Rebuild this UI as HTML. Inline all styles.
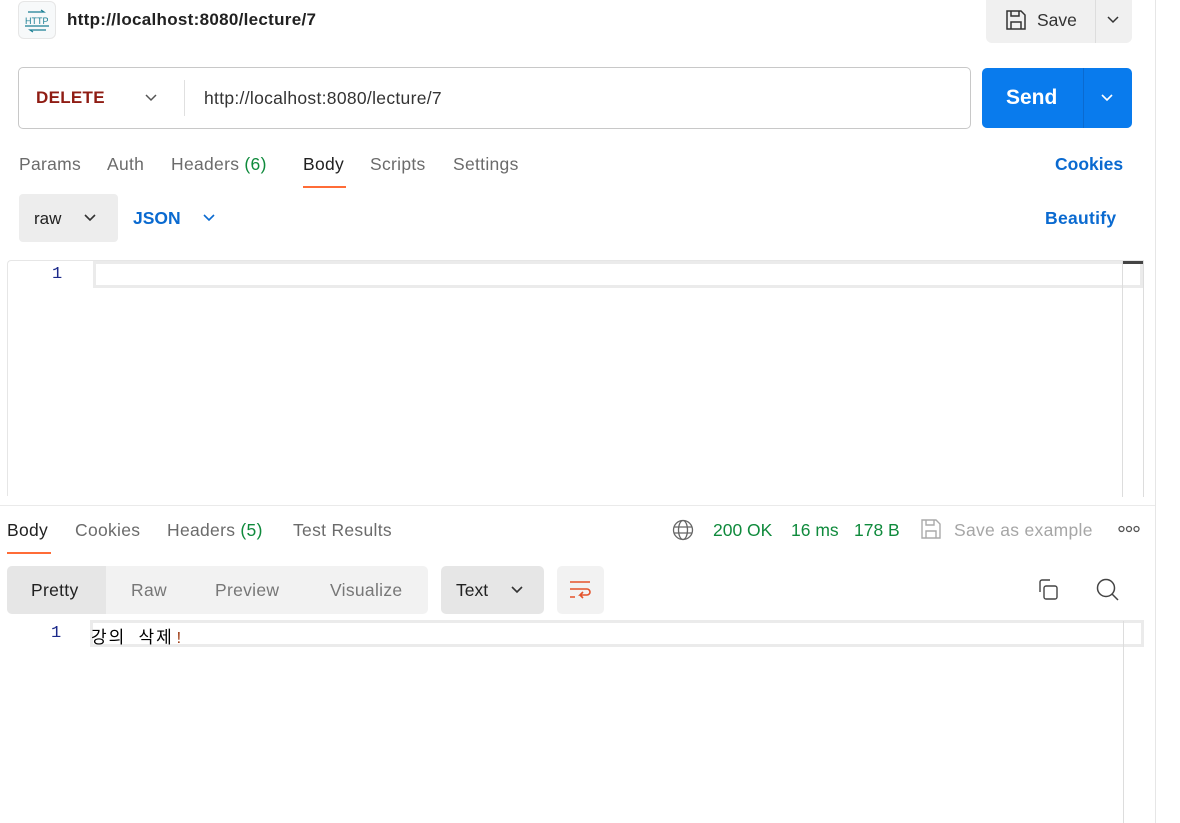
<!DOCTYPE html>
<html><head><meta charset="utf-8"><style>
*{box-sizing:border-box;margin:0;padding:0}
body{width:1180px;height:823px;background:#fff;font-family:"Liberation Sans","Noto Sans CJK KR",sans-serif;position:relative;overflow:hidden;color:#212121}
.a{position:absolute}
.t{font-size:17.5px;color:#6b6b6b;letter-spacing:0.3px}
</style></head><body>
<div class="a" style="left:1155px;top:0;width:1px;height:823px;background:#e6e6e6"></div>
<div class="a" style="left:18px;top:1px;width:38px;height:38px;border:1px solid #e6e6e6;border-radius:6px;background:#f7f9fa"></div>
<svg class="a" style="left:22px;top:6px" width="30" height="30" viewBox="0 0 30 30" fill="none" stroke="#1a7f94" stroke-width="1.2"><path d="M6 6h16l-3-2M24 24H8l3 2"/><text x="3" y="18" font-size="9" fill="#1a7f94" stroke="none" font-family="Liberation Sans">HTTP</text><path d="M3 20h24"/></svg>
<div class="a" style="left:67px;top:10px;font-size:17px;font-weight:bold;color:#212121;letter-spacing:0.3px">http://localhost:8080/lecture/7</div>
<div class="a" style="left:986px;top:0;width:146px;height:43px;background:#f0f0f0;border-radius:0 0 6px 6px"></div>
<div class="a" style="left:1095px;top:0;width:1px;height:43px;background:#ddd"></div>
<svg class="a" style="left:1005px;top:9px" width="22" height="22" viewBox="0 0 22 22" fill="none" stroke="#333" stroke-width="1.5"><path d="M2 2h14l4 4v14H2z M6 2v5h8V2 M6 20v-7h10v7"/></svg>
<div class="a" style="left:1037px;top:10px;font-size:17.5px;color:#333">Save</div>
<svg class="a" style="left:1106px;top:14px" width="14" height="12" viewBox="0 0 14 12" fill="none" stroke="#333" stroke-width="1.5"><path d="M2 3l5 5 5-5"/></svg>
<div class="a" style="left:18px;top:67px;width:953px;height:62px;border:1px solid #c8c8c8;border-radius:5px"></div>
<div class="a" style="left:184px;top:80px;width:1px;height:36px;background:#e0e0e0"></div>
<div class="a" style="left:36px;top:88px;font-size:17px;font-weight:bold;color:#8f1c13;letter-spacing:0.3px">DELETE</div>
<svg class="a" style="left:143px;top:92px" width="16" height="12" viewBox="0 0 16 12" fill="none" stroke="#555" stroke-width="1.5"><path d="M3 3l5 5 5-5"/></svg>
<div class="a" style="left:204px;top:88px;font-size:17.5px;color:#333;letter-spacing:0.3px">http://localhost:8080/lecture/7</div>
<div class="a" style="left:982px;top:68px;width:150px;height:60px;background:#097bed;border-radius:5px"></div>
<div class="a" style="left:1083px;top:68px;width:1px;height:60px;background:#0a6ad0"></div>
<div class="a" style="left:1006px;top:86px;font-size:21px;font-weight:bold;color:#fff">Send</div>
<svg class="a" style="left:1100px;top:92px" width="14" height="12" viewBox="0 0 14 12" fill="none" stroke="#fff" stroke-width="1.6"><path d="M2 3l5 5 5-5"/></svg>
<div class="a t" style="left:19px;top:154px">Params</div>
<div class="a t" style="left:107px;top:154px">Auth</div>
<div class="a t" style="left:171px;top:154px">Headers <span style="color:#0f8a3c">(6)</span></div>
<div class="a t" style="left:303px;top:154px;color:#212121">Body</div>
<div class="a" style="left:303px;top:186px;width:43px;height:2px;background:#ff6c37"></div>
<div class="a t" style="left:370px;top:154px">Scripts</div>
<div class="a t" style="left:453px;top:154px">Settings</div>
<div class="a" style="left:1055px;top:154px;font-size:17.5px;font-weight:bold;color:#0a6ad0">Cookies</div>
<div class="a" style="left:19px;top:194px;width:99px;height:48px;background:#ededed;border-radius:4px"></div>
<div class="a" style="left:34px;top:209px;font-size:17px;color:#212121">raw</div>
<svg class="a" style="left:83px;top:212px" width="14" height="12" viewBox="0 0 14 12" fill="none" stroke="#333" stroke-width="1.6"><path d="M2 3l5 5 5-5"/></svg>
<div class="a" style="left:133px;top:208px;font-size:17.5px;font-weight:bold;color:#0a6ad0">JSON</div>
<svg class="a" style="left:202px;top:212px" width="14" height="12" viewBox="0 0 14 12" fill="none" stroke="#0a6ad0" stroke-width="1.6"><path d="M2 3l5 5 5-5"/></svg>
<div class="a" style="left:1045px;top:208px;font-size:17.5px;font-weight:bold;color:#0a6ad0;letter-spacing:0.3px">Beautify</div>
<div class="a" style="left:7px;top:260px;width:1137px;height:236px;border-left:1px solid #e6e6e6;border-top:1px solid #e6e6e6;border-radius:4px 0 0 0"></div>
<div class="a" style="left:93px;top:261px;width:1050px;height:27px;border:3px solid #ebebeb"></div>
<div class="a" style="left:52px;top:265px;font-family:'Liberation Mono',monospace;font-size:17px;color:#1c2a8a">1</div>
<div class="a" style="left:1122px;top:261px;width:1px;height:236px;background:#ddd"></div>
<div class="a" style="left:1143px;top:261px;width:1px;height:236px;background:#ddd"></div>
<div class="a" style="left:1123px;top:261px;width:20px;height:3px;background:#444"></div>
<div class="a" style="left:0;top:505px;width:1155px;height:1px;background:#eaeaea"></div>
<div class="a t" style="left:7px;top:520px;color:#212121">Body</div>
<div class="a" style="left:7px;top:552px;width:44px;height:2px;background:#ff6c37"></div>
<div class="a t" style="left:75px;top:520px">Cookies</div>
<div class="a t" style="left:167px;top:520px">Headers <span style="color:#0f8a3c">(5)</span></div>
<div class="a t" style="left:293px;top:520px">Test Results</div>
<svg class="a" style="left:672px;top:519px" width="22" height="22" viewBox="0 0 22 22" fill="none" stroke="#666" stroke-width="1.3"><circle cx="11" cy="11" r="9.5"/><ellipse cx="11" cy="11" rx="4.5" ry="9.5"/><path d="M2 8h18M2 14h18"/></svg>
<div class="a" style="left:713px;top:520px;font-size:17.5px;color:#0f8a3c">200 OK</div>
<div class="a" style="left:791px;top:520px;font-size:17.5px;color:#0f8a3c">16 ms</div>
<div class="a" style="left:854px;top:520px;font-size:17.5px;color:#0f8a3c">178 B</div>
<svg class="a" style="left:920px;top:518px" width="22" height="22" viewBox="0 0 22 22" fill="none" stroke="#aaa" stroke-width="1.4"><path d="M2 2h14l4 4v14H2z M6 2v5h8V2 M6 20v-7h10v7"/></svg>
<div class="a" style="left:954px;top:520px;font-size:17.5px;color:#a6a6a6;letter-spacing:0.3px">Save as example</div>
<svg class="a" style="left:1118px;top:525px" width="22" height="8" viewBox="0 0 22 8" fill="none" stroke="#555" stroke-width="1.3"><circle cx="3.5" cy="4" r="2.5"/><circle cx="11" cy="4" r="2.5"/><circle cx="18.5" cy="4" r="2.5"/></svg>
<div class="a" style="left:7px;top:566px;width:421px;height:48px;background:#f2f2f2;border-radius:5px"></div>
<div class="a" style="left:7px;top:566px;width:99px;height:48px;background:#e6e6e6;border-radius:5px 0 0 5px"></div>
<div class="a" style="left:31px;top:580px;font-size:17.5px;color:#212121;letter-spacing:0.3px">Pretty</div>
<div class="a" style="left:131px;top:580px;font-size:17.5px;color:#777;letter-spacing:0.3px">Raw</div>
<div class="a" style="left:215px;top:580px;font-size:17.5px;color:#777;letter-spacing:0.3px">Preview</div>
<div class="a" style="left:330px;top:580px;font-size:17.5px;color:#777;letter-spacing:0.3px">Visualize</div>
<div class="a" style="left:441px;top:566px;width:103px;height:48px;background:#e6e6e6;border-radius:5px"></div>
<div class="a" style="left:456px;top:580px;font-size:17.5px;color:#212121">Text</div>
<svg class="a" style="left:510px;top:584px" width="14" height="12" viewBox="0 0 14 12" fill="none" stroke="#333" stroke-width="1.6"><path d="M2 3l5 5 5-5"/></svg>
<div class="a" style="left:557px;top:566px;width:47px;height:48px;background:#f2f2f2;border-radius:5px"></div>
<svg class="a" style="left:568px;top:579px" width="24" height="22" viewBox="0 0 24 22" fill="none" stroke="#e4532a" stroke-width="1.6"><path d="M2 3h20M2 10h17a3 3 0 0 1 0 6h-7l3-3M12 16l3 3M2 18h5"/></svg>
<svg class="a" style="left:1036px;top:578px" width="24" height="24" viewBox="0 0 24 24" fill="none" stroke="#444" stroke-width="1.4"><path d="M4 14V4a2 2 0 0 1 2-2h8"/><rect x="8" y="8" width="13" height="13" rx="2"/></svg>
<svg class="a" style="left:1095px;top:577px" width="26" height="26" viewBox="0 0 26 26" fill="none" stroke="#444" stroke-width="1.5"><circle cx="11" cy="11" r="8.5"/><path d="M17 17l6 6"/></svg>
<div class="a" style="left:90px;top:620px;width:1054px;height:27px;border:3px solid #ebebeb"></div>
<div class="a" style="left:51px;top:624px;font-family:'Liberation Mono',monospace;font-size:17px;color:#1c2a8a">1</div>
<div class="a" style="left:91px;top:623px;font-size:17px;color:#000;letter-spacing:2px;font-family:'Liberation Mono','Noto Sans CJK KR',monospace">강의 삭제<span style="color:#a0401a">!</span></div>
<div class="a" style="left:1123px;top:621px;width:1px;height:202px;background:#ddd"></div>
</body></html>
